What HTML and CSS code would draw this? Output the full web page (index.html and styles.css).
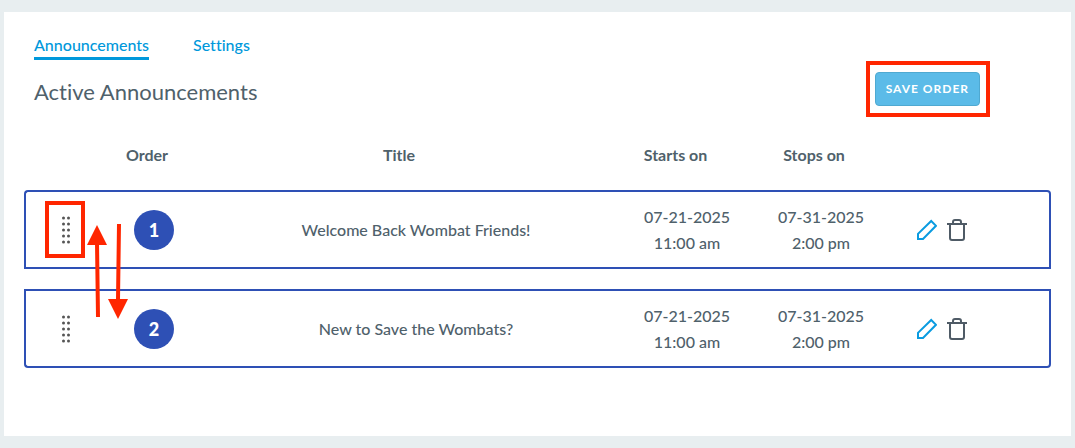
FILE: index.html
```
<!DOCTYPE html>
<html lang="en">
<head>
  <meta charset="UTF-8">
  <meta name="viewport" content="width=device-width, initial-scale=1">
  <title>Announcements</title>
  <link rel="stylesheet" href="styles.css">
</head>
<body>

<!-- shared icons -->
<svg class="sprite" width="0" height="0" aria-hidden="true">
  <symbol id="dots" viewBox="0 0 8 28">
    <g fill="#555">
      <circle cx="1.5" cy="2" r="1.5"/><circle cx="6.5" cy="2" r="1.5"/>
      <circle cx="1.5" cy="8" r="1.5"/><circle cx="6.5" cy="8" r="1.5"/>
      <circle cx="1.5" cy="14" r="1.5"/><circle cx="6.5" cy="14" r="1.5"/>
      <circle cx="1.5" cy="20" r="1.5"/><circle cx="6.5" cy="20" r="1.5"/>
      <circle cx="1.5" cy="26" r="1.5"/><circle cx="6.5" cy="26" r="1.5"/>
    </g>
  </symbol>
  <symbol id="pencil" viewBox="0 0 20 22">
    <path d="M1 20V14.8L14.2 2L19 6.8L6 20Z" fill="none" stroke="#0a9be0" stroke-width="2"/>
  </symbol>
  <symbol id="trash" viewBox="0 0 20 22">
    <path d="M0 5H20M6 5V3Q6 1 8 1H12Q14 1 14 3V5M3 5V19Q3 21 5 21H15Q17 21 17 19V5" fill="none" stroke="#4f5b66" stroke-width="2"/>
  </symbol>
</svg>

<main class="panel">
  <nav class="tabs">
    <a class="tab active" href="#announcements">Announcements</a>
    <a class="tab" href="#settings">Settings</a>
  </nav>

  <header class="head">
    <h1>Active Announcements</h1>
    <div class="save">
      <button class="save-btn" type="button">Save Order</button>
      <span class="mark mark-save"></span>
    </div>
  </header>

  <table class="list">
    <colgroup>
      <col class="col-handle">
      <col class="col-order">
      <col>
      <col class="col-start">
      <col class="col-stop">
      <col class="col-actions">
    </colgroup>
    <thead>
      <tr>
        <td></td>
        <th class="th-order" scope="col">Order</th>
        <th class="th-title" scope="col">Title</th>
        <th class="th-start" scope="col">Starts on</th>
        <th class="th-stop" scope="col">Stops on</th>
        <td></td>
      </tr>
    </thead>
    <tbody>
      <tr>
        <td>
          <button class="handle" type="button" aria-label="Move announcement 1">
            <svg width="8" height="28"><use href="#dots"/></svg>
            <span class="mark mark-handle"></span>
          </button>
        </td>
        <td><span class="number">1</span></td>
        <td>Welcome Back Wombat Friends!</td>
        <td>07-21-2025<br>11:00 am</td>
        <td>07-31-2025<br>2:00 pm</td>
        <td>
          <div class="actions">
            <button type="button" aria-label="Edit"><svg width="20" height="22"><use href="#pencil"/></svg></button>
            <button type="button" aria-label="Delete"><svg width="20" height="22"><use href="#trash"/></svg></button>
          </div>
        </td>
      </tr>
      <tr>
        <td>
          <button class="handle" type="button" aria-label="Move announcement 2">
            <svg width="8" height="28"><use href="#dots"/></svg>
          </button>
        </td>
        <td><span class="number">2</span></td>
        <td>New to Save the Wombats?</td>
        <td>07-21-2025<br>11:00 am</td>
        <td>07-31-2025<br>2:00 pm</td>
        <td>
          <div class="actions">
            <button type="button" aria-label="Edit"><svg width="20" height="22"><use href="#pencil"/></svg></button>
            <button type="button" aria-label="Delete"><svg width="20" height="22"><use href="#trash"/></svg></button>
          </div>
        </td>
      </tr>
    </tbody>
  </table>

  <!-- swap arrows over the two rows -->
  <svg class="arrows" width="44" height="100" viewBox="0 0 44 100" aria-hidden="true">
    <path d="M12 22L13 97M34 4L33 80" stroke="#ff2600" stroke-width="4"/>
    <path d="M12 5L22 25H2ZM33 99L43 79H23Z" fill="#ff2600"/>
  </svg>
</main>

</body>
</html>
```
FILE: styles.css
```
* {
  box-sizing: border-box;
}
body {
  margin: 0;
  padding: 12px 4px;
  background-color: #e8eef0;
  font-family: Lato, "Open Sans", sans-serif;
  font-size: 16px;
  font-weight: 500;
  font-variant-ligatures: none;
  line-height: 26px;
  color: #4f616b;
}
button {
  padding: 0;
  border: 0;
  background: none;
  font: inherit;
  cursor: pointer;
}
svg {
  display: block;
}
.sprite {
  position: absolute;
}
.panel {
  position: relative;
  padding: 20px 20px 48px;
  background-color: #fff;
}

/* tabs */
.tabs {
  display: flex;
  gap: 44px;
  padding-left: 10px;
}
.tab {
  height: 28px;
  color: #0098db;
  text-decoration: none;
}
.tab.active {
  border-bottom: 3px solid #0098db;
}

/* title and save button */
.head {
  display: flex;
  justify-content: space-between;
  align-items: flex-end;
  margin-top: 12px;
  padding: 0 71px 0 10px;
}
.head h1 {
  margin: 0;
  font-size: 22px;
  font-weight: 400;
  line-height: 28px;
}
.save {
  position: relative;
}
.save-btn {
  display: block;
  height: 34px;
  padding: 0 10px;
  border: 1px solid #4fa9d1;
  border-radius: 4px;
  background-color: #5bbbe8;
  color: #fff;
  font-size: 12px;
  font-weight: 700;
  letter-spacing: 1px;
  text-transform: uppercase;
}

/* red frames */
.mark {
  position: absolute;
  border: 4px solid #ff2600;
}
.mark-save {
  inset: -11px -10px -11px -9px;
}
.mark-handle {
  inset: -15px -15px -14px -17px;
}

/* announcements */
.list {
  width: 100%;
  margin-top: 14px;
  table-layout: fixed;
  border-collapse: separate;
  border-spacing: 0 20px;
  text-align: center;
}
.col-handle {
  width: 82px;
}
.col-order {
  width: 96px;
}
.col-start {
  width: 114px;
}
.col-stop {
  width: 154px;
}
.col-actions {
  width: 153px;
}
.list td,
.list th {
  padding: 0;
}
.list th {
  height: 30px;
  font-weight: 700;
}
.list .th-order,
.list .th-stop {
  padding-right: 14px;
}
.list .th-title {
  padding-right: 34px;
}
.list .th-start {
  padding-right: 23px;
}
.list tbody td {
  height: 79px;
  border: solid #2e50b5;
  border-width: 2px 0;
}
.list tbody td:first-child {
  border-left-width: 2px;
}
.list tbody td:last-child {
  border-right-width: 2px;
}
.list tbody tr:first-child td:first-child {
  border-top-left-radius: 4px;
}
.list tbody tr:first-child td:last-child {
  border-top-right-radius: 4px;
}
.list tbody tr:last-child td:first-child {
  border-bottom-left-radius: 4px;
}
.list tbody tr:last-child td:last-child {
  border-bottom-right-radius: 4px;
}
.handle {
  position: relative;
  display: block;
  margin: 0 auto;
  cursor: move;
}
.number {
  display: block;
  width: 40px;
  margin: 0 auto;
  border-radius: 50%;
  background-color: #2e50b5;
  color: #fff;
  font-size: 18px;
  font-weight: 900;
  line-height: 40px;
}
.actions {
  display: flex;
  gap: 10px;
  padding-left: 19px;
}
.arrows {
  position: absolute;
  left: 81px;
  top: 208px;
}
```
